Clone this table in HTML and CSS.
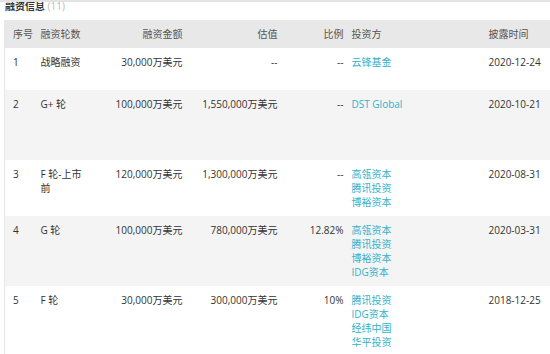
FILE: index.html
```html
<!DOCTYPE html>
<html lang="zh">
<head>
<meta charset="utf-8">
<link rel="stylesheet" href="styles.css">
</head>
<body>
<div class="top-rule"></div>
<div class="panel">
  <div class="title">融资信息 <span class="count">(11)</span></div>
  <table class="fin">
    <colgroup>
      <col class="c-no"><col class="c-round"><col class="c-amt"><col class="c-val"><col class="c-pct"><col class="c-inv"><col class="c-date">
    </colgroup>
    <thead>
      <tr>
        <th class="first">序号</th>
        <th>融资轮数</th>
        <th class="num">融资金额</th>
        <th class="num">估值</th>
        <th class="num">比例</th>
        <th>投资方</th>
        <th>披露时间</th>
      </tr>
    </thead>
    <tbody>
      <tr class="h2">
        <td class="first">1</td>
        <td>战略融资</td>
        <td class="num">30,000万美元</td>
        <td class="num">--</td>
        <td class="num">--</td>
        <td><a class="inv">云锋基金</a></td>
        <td>2020-12-24</td>
      </tr>
      <tr class="alt h4">
        <td class="first">2</td>
        <td>G+ 轮</td>
        <td class="num">100,000万美元</td>
        <td class="num">1,550,000万美元</td>
        <td class="num">--</td>
        <td><a class="inv">DST Global</a></td>
        <td>2020-10-21</td>
      </tr>
      <tr>
        <td class="first">3</td>
        <td>F 轮-上市前</td>
        <td class="num">120,000万美元</td>
        <td class="num">1,300,000万美元</td>
        <td class="num">--</td>
        <td><a class="inv">高瓴资本</a><a class="inv">腾讯投资</a><a class="inv">博裕资本</a></td>
        <td>2020-08-31</td>
      </tr>
      <tr class="alt">
        <td class="first">4</td>
        <td>G 轮</td>
        <td class="num">100,000万美元</td>
        <td class="num">780,000万美元</td>
        <td class="num">12.82%</td>
        <td><a class="inv">高瓴资本</a><a class="inv">腾讯投资</a><a class="inv">博裕资本</a><a class="inv">IDG资本</a></td>
        <td>2020-03-31</td>
      </tr>
      <tr>
        <td class="first">5</td>
        <td>F 轮</td>
        <td class="num">30,000万美元</td>
        <td class="num">300,000万美元</td>
        <td class="num">10%</td>
        <td><a class="inv">腾讯投资</a><a class="inv">IDG资本</a><a class="inv">经纬中国</a><a class="inv">华平投资</a></td>
        <td>2018-12-25</td>
      </tr>
    </tbody>
  </table>
</div>
</body>
</html>
```

FILE: styles.css
```css
html, body {
  margin: 0;
  padding: 0;
  background: #fff;
  overflow: hidden;
}
body {
  font-family: "Open Sans", "Noto Sans CJK SC", sans-serif;
  font-size: 10px;
  line-height: 14px;
  color: #333;
  width: 550px;
  height: 354px;
  position: relative;
}
.top-rule {
  position: absolute;
  left: 0;
  top: 0;
  width: 550px;
  height: 2px;
  background: #e3e3e3;
  z-index: 2;
}
.panel {
  padding-left: 4px;
}
.title {
  height: 12px;
  line-height: 12px;
  margin-bottom: 8px;
  padding-left: 1px;
  font-weight: bold;
  color: #333;
}
.count {
  font-weight: normal;
  color: #bbb;
}
.fin {
  border-collapse: collapse;
  table-layout: fixed;
  width: 560px;
  border-left: 1px solid #e6e6e6;
}
.c-no { width: 32px; }
.c-round { width: 54px; }
.c-amt { width: 96px; }
.c-val { width: 95px; }
.c-pct { width: 66px; }
.c-inv { width: 137px; }
.c-date { width: 80px; }
th, td {
  padding: 7px 4px;
  text-align: left;
  vertical-align: top;
  font-weight: normal;
}
th {
  background: #e8e8e8;
  color: #555;
}
th.first, td.first { padding-left: 8px; padding-right: 0; }
.num { text-align: right; }
tr.alt td { background: #f4f4f4; }
tr.h2 { height: 42px; }
tr.h4 { height: 70px; }
.inv {
  display: block;
  color: #33b1c9;
  text-decoration: none;
}
```
